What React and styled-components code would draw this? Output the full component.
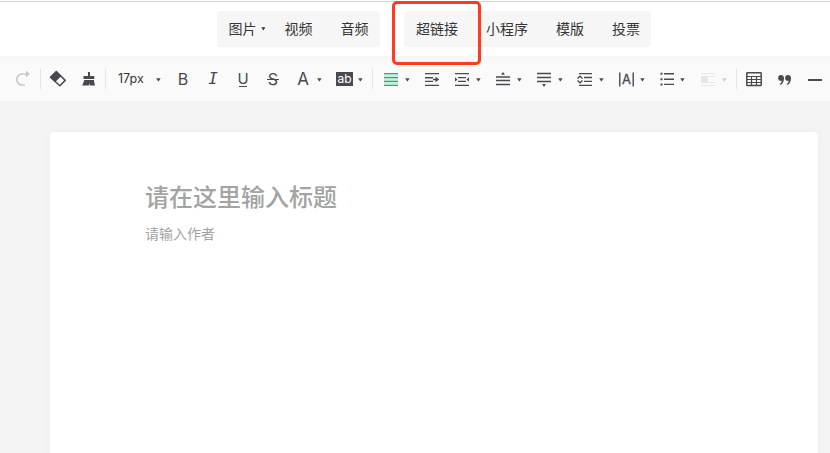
import React from 'react';
import styled, { createGlobalStyle } from 'styled-components';

const GlobalStyle = createGlobalStyle`
  * { box-sizing: border-box; }
  html, body { margin: 0; padding: 0; overflow: hidden; }
  body { font-family: "Liberation Sans", "Noto Sans CJK SC", sans-serif; }
`;

const Page = styled.div`
  position: relative;
  display: flex;
  flex-direction: column;
  width: 830px;
  height: 453px;
  overflow: hidden;
  background: #f4f4f4;
`;

const InsertBar = styled.header`
  display: flex;
  flex: none;
  gap: 24px;
  height: 56px;
  padding: 11px 0 0 217px;
  background: linear-gradient(#fff 1px, #d9d9d9 1px, #d9d9d9 2px, #fff 2px);
`;

const InsertGroup = styled.nav`
  display: flex;
  align-items: center;
  gap: 28px;
  width: ${(p) => p.$width}px;
  height: 36px;
  padding: 0 0 2px ${(p) => p.$inset}px;
  border-radius: 3px;
  background: #f6f6f6;
`;

const InsertButton = styled.button`
  position: relative;
  flex: none;
  padding: 0;
  border: 0;
  background: none;
  color: #353535;
  font: 14px/20px "Noto Sans CJK SC", sans-serif;
  white-space: nowrap;
`;

const MenuCaret = styled.svg`
  position: absolute;
  left: 32.6px;
  top: 9px;
  width: 5px;
  height: 4px;
`;

const Highlight = styled.div`
  position: absolute;
  left: 392px;
  top: 1px;
  width: 89px;
  height: 64px;
  border: 3px solid #ff3b20;
  border-radius: 5px;
`;

const Toolbar = styled.div`
  display: flex;
  flex: none;
  align-items: center;
  height: 45px;
  padding: 1px 0 0 14px;
  background: linear-gradient(#f7f7f7, #fafafa 10px);
  color: #4a4950;
`;

const Icon = styled.svg`
  flex: none;
  width: 18px;
  height: 18px;
  margin-left: ${(p) => p.$gap || 0}px;
  fill: none;
  stroke: ${(p) => p.$color || 'currentColor'};
  stroke-width: 1.6;
`;

const CaretIcon = styled.svg`
  flex: none;
  width: 5px;
  height: 4px;
  margin: 1px 0 0 ${(p) => p.$gap}px;
  fill: ${(p) => (p.$disabled ? '#ccc' : '#4a4950')};
`;

const Separator = styled.span`
  flex: none;
  width: 1px;
  height: 20px;
  margin-left: ${(p) => p.$gap}px;
  background: #e4e4e4;
`;

const SizeLabel = styled.span`
  flex: none;
  width: 26px;
  margin-left: 12px;
  color: #353535;
  font: 12.5px/18px Inter, sans-serif;
  white-space: nowrap;
`;

const Letter = styled.span`
  position: relative;
  flex: none;
  width: 18px;
  height: 18px;
  margin-left: ${(p) => p.$gap}px;
  font: ${(p) => p.$weight || 400} ${(p) => p.$size || 16}px/18px Inter, sans-serif;
  text-align: center;
`;

const Italic = styled(Letter)`
  font: italic 400 16px/18px "DejaVu Sans Mono", monospace;
`;

const Underlined = styled(Letter)`
  font-size: 15px;
  line-height: 17px;
  &::after {
    content: "";
    position: absolute;
    left: 5px;
    top: 16px;
    width: 8px;
    height: 1px;
    background: currentColor;
  }
`;

const Struck = styled(Letter)`
  &::after {
    content: "";
    position: absolute;
    left: 3px;
    top: 9px;
    width: 12px;
    height: 1px;
    background: currentColor;
  }
`;

const Marker = styled.span`
  flex: none;
  width: 17px;
  height: 14px;
  margin: 0 1px 0 14px;
  background: #4a4950;
  color: #fff;
  font: 400 12px/13px Inter, sans-serif;
  text-align: center;
`;

const Canvas = styled.main`
  flex: 1;
  padding: 31px 12px 0 50px;
`;

const Sheet = styled.article`
  height: 330px;
  padding: 47px 95px 0;
  border-radius: 4px;
  background: #fff;
  box-shadow: 0 0 8px rgba(0, 0, 0, 0.035);
`;

const Title = styled.h1`
  margin: 0;
  color: #a3a3a3;
  font: 500 24px/34px "Noto Sans CJK SC", sans-serif;
`;

const Author = styled.p`
  margin: 10px 0 0;
  color: #a3a3a3;
  font: 14px/20px "Noto Sans CJK SC", sans-serif;
`;

const Caret = ({ gap, disabled }) => (
  <CaretIcon $gap={gap} $disabled={disabled} viewBox="0 0 5 4">
    <path d="M0.2 0.2h4.4L2.7 3.3H2.1z" />
  </CaretIcon>
);

export default function App() {
  return (
    <Page>
      <GlobalStyle />
      <InsertBar>
        <InsertGroup $width={163} $inset={11.4}>
          <InsertButton>
            图片
            <MenuCaret viewBox="0 0 5 4"><path d="M0.3 0.3h4.1L2.4 3.4z" fill="#353535" /></MenuCaret>
          </InsertButton>
          <InsertButton>视频</InsertButton>
          <InsertButton>音频</InsertButton>
        </InsertGroup>
        <InsertGroup $width={247} $inset={12}>
          <InsertButton>超链接</InsertButton>
          <InsertButton>小程序</InsertButton>
          <InsertButton>模版</InsertButton>
          <InsertButton>投票</InsertButton>
        </InsertGroup>
      </InsertBar>

      <Toolbar>
        <Icon $color="#c8c8c8">
          <path d="M13 4H8.2a5.5 5.5 0 0 0 0 11H11" />
          <path d="M12 0.8l4 3.2-4 3.2z" fill="#c8c8c8" stroke="none" />
        </Icon>
        <Separator $gap={8} />
        <Icon $gap={8}>
          <path d="M1.5 7.3L7.3 1.5 16.2 10.4 10.9 15.8z" strokeWidth="1.5" strokeLinejoin="round" />
          <path d="M1 7.3L7.3 1 12.3 6 6 12.3z" fill="currentColor" stroke="none" />
        </Icon>
        <Icon $gap={13}>
          <path d="M8 2h2v4h4.3v3H3.5V6H8zM4 10h10v1l1 4.5H9.8L9.4 13l-.5 2.5H2.2L4 11z" fill="currentColor" stroke="none" />
        </Icon>
        <Separator $gap={7} />
        <SizeLabel>17px</SizeLabel>
        <Caret gap={12} />
        <Letter $gap={13}>B</Letter>
        <Italic $gap={12}>I</Italic>
        <Underlined $gap={12}>U</Underlined>
        <Struck $gap={12}>S</Struck>
        <Letter $gap={12} $size={17}>A</Letter>
        <Caret gap={5} />
        <Marker>ab</Marker>
        <Caret gap={4} />
        <Separator $gap={9} />
        <Icon $gap={9} $color="#12bb67">
          <path d="M2 3.5h14M2 7.5h14M2 11.5h14M2 15.5h14" strokeWidth="1" />
          <path d="M2 5.5h14M2 9.5h14M2 13.5h14" strokeWidth="3" opacity="0.2" />
          <path d="M2 4.5h14M2 8.5h14M2 10.5h14M2 14.5h14" strokeWidth="1" opacity="0.2" />
        </Icon>
        <Caret gap={5} />
        <Icon $gap={13}>
          <path d="M2 3.6h14M2 7.7h8M2 11.4h8M2 15.4h14M10 9.5h3" strokeWidth="1.4" />
          <path d="M12.5 6.8L16.3 9.5l-3.8 2.7z" fill="currentColor" stroke="none" />
        </Icon>
        <Icon $gap={12}>
          <path d="M2 3.6h14M5 7.6h8M5 11.4h8M2 15.4h14" strokeWidth="1.4" />
          <path d="M2 7.3l2.5 2.2L2 11.7zM16 7.3l-2.5 2.2 2.5 2.2z" fill="currentColor" stroke="none" />
        </Icon>
        <Caret gap={5} />
        <Icon $gap={13}>
          <path d="M2 7h14M2 10.6h14M2 14.5h14" strokeWidth="1.5" />
          <path d="M7 4.7L9 2l2 2.7z" fill="currentColor" stroke="none" />
        </Icon>
        <Caret gap={5} />
        <Icon $gap={13}>
          <path d="M2 3.6h14M2 7.6h14M2 11.5h14" strokeWidth="1.5" />
          <path d="M7 14l2 2.7 2-2.7z" fill="currentColor" stroke="none" />
        </Icon>
        <Caret gap={5} />
        <Icon $gap={13}>
          <path d="M3 3.6h13M8 7.5h8M8 11.4h8M3 15.4h13" strokeWidth="1.4" />
          <path d="M1.5 8.5L4 6.2l2.5 2.3M1.500 10.500L4 12.800l2.500-2.300" strokeWidth="1.3" />
        </Icon>
        <Caret gap={5} />
        <Icon $gap={13}>
          <path d="M2.8 2.5v14M16.2 2.5v14" strokeWidth="1.4" />
          <text x="9.5" y="14" textAnchor="middle" fontFamily="Inter, sans-serif" fontSize="13" fill="currentColor" strokeWidth="0.3">A</text>
        </Icon>
        <Caret gap={5} />
        <Icon $gap={13}>
          <path d="M6 3.7h10M6 9.2h10M6 14.4h10" strokeWidth="1.4" />
          <path d="M2.5 3.8h2M2.5 9.2h2M2.5 14.4h2" strokeWidth="2" />
        </Icon>
        <Caret gap={4} />
        <Icon $gap={14} $color="#e6e6e6">
          <path d="M2 3.5h14M10 6.5h6M10 12.5h6M2 15.5h14" strokeWidth="1" />
          <path d="M2 6h7v7H2z" fill="#e6e6e6" stroke="none" />
        </Icon>
        <Caret gap={5} disabled />
        <Separator $gap={9} />
        <Icon $gap={8}>
          <rect x="1.8" y="2.8" width="14.4" height="12.8" rx="0.6" strokeWidth="1.5" />
          <path d="M2 6.5h14M2 9.5h14M2 12.5h14M6.5 6.5v9M11.5 6.5v9" strokeWidth="1.2" />
        </Icon>
        <Icon $gap={13}>
          <path d="M5 5a2.9 2.9 0 1 0 .1 5.8h.6c-.2 1.6-1 2.8-2.1 3.7l.7.6C6.6 13.8 8 11.5 8 8.2 8 6.2 6.7 5 5 5zM12 5a2.9 2.9 0 1 0 .1 5.8h.6c-.2 1.6-1 2.8-2.1 3.7l.7.6C13.6 13.8 15 11.5 15 8.2 15 6.2 13.7 5 12 5z" fill="currentColor" stroke="none" />
        </Icon>
        <Icon $gap={12}>
          <path d="M2 10h14" strokeWidth="2" />
        </Icon>
      </Toolbar>

      <Canvas>
        <Sheet>
          <Title>请在这里输入标题</Title>
          <Author>请输入作者</Author>
        </Sheet>
      </Canvas>
      <Highlight />
    </Page>
  );
}
